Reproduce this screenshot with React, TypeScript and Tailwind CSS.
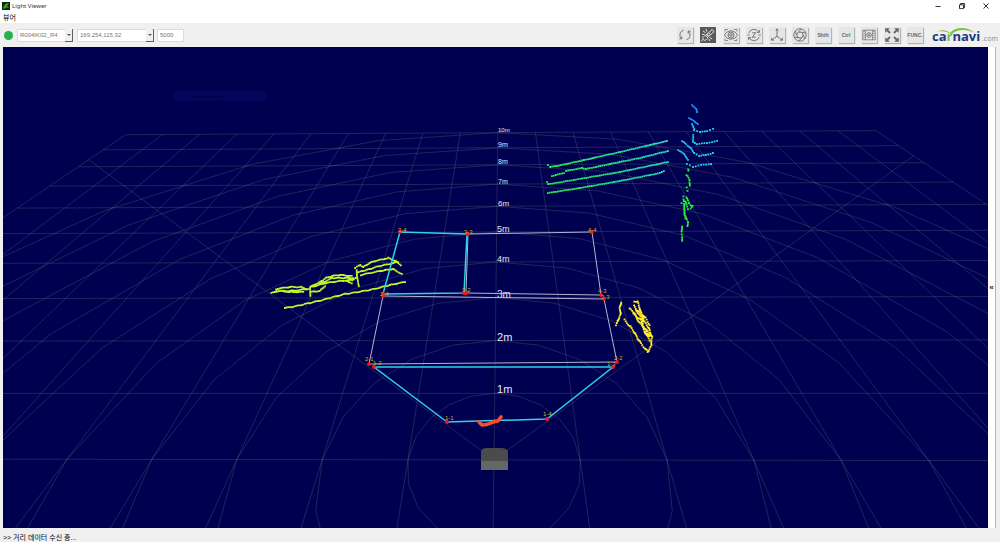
/** Light Viewer - live point cloud window for the distance sensor. */
import { useMemo, useState } from "react";
import type { ReactNode } from "react";

type Point = [number, number];

interface Scan {
  color: string;
  step: number;
  jitter: number;
  lines: Point[][];
}

interface Zone {
  color: string;
  width: number;
  points: Point[];
}

interface Tool {
  label: string;
  icon: ReactNode;
}

const DEVICES = ["R004IK02_R4"];
const ADDRESSES = ["169,254,115,32"];

// Ground plane (meters) -> view coordinates
function project(u: number, d: number): Point {
  const w = 1 + 0.1298 * d - 0.0018 * u;
  return [(494 + 85.3 * u + 65 * d) / w, (459.9 - 15.5 * d - 0.71 * u) / w];
}

// Segment on the ground plane, cut off before it goes behind the camera
function groundSegment(a: Point, b: Point): string {
  const near = -2;
  if (a[1] < near && b[1] < near) return "";
  const cut = (from: Point, to: Point): Point => {
    if (from[1] >= near) return from;
    const t = (near - from[1]) / (to[1] - from[1]);
    return [from[0] + (to[0] - from[0]) * t, near];
  };
  const p = project(...cut(a, b));
  const q = project(...cut(b, a));
  return `M${p[0].toFixed(1)} ${p[1].toFixed(1)}L${q[0].toFixed(1)} ${q[1].toFixed(1)}`;
}

function buildGrid(): string {
  const parts: string[] = [];
  for (let i = -10; i <= 10; i++) {
    parts.push(groundSegment([i, -2], [i, 10]));
  }
  for (let d = 0; d <= 10; d++) {
    parts.push(groundSegment([-10, d], [10, d]));
  }
  // Range rings, 20 segments each
  for (let r = 1; r <= 10; r++) {
    for (let k = 0; k < 20; k++) {
      const a = (k * Math.PI) / 10;
      const b = ((k + 1) * Math.PI) / 10;
      parts.push(
        groundSegment([r * Math.cos(a), r * Math.sin(a)], [r * Math.cos(b), r * Math.sin(b)])
      );
    }
  }
  // Field of view
  parts.push(groundSegment([0, 0], [-10, 8.4]));
  parts.push(groundSegment([0, 0], [10, 8.4]));
  return parts.join("");
}

function buildDots({ lines, step, jitter }: Scan): string {
  let out = "";
  let n = 0;
  for (const line of lines) {
    for (let i = 0; i < line.length - 1; i++) {
      const [x1, y1] = line[i];
      const [x2, y2] = line[i + 1];
      const count = Math.max(1, Math.round(Math.hypot(x2 - x1, y2 - y1) / step));
      for (let k = 0; k <= count; k++) {
        n++;
        const x = x1 + ((x2 - x1) * k) / count + Math.sin(n * 12.9) * jitter;
        const y = y1 + ((y2 - y1) * k) / count + Math.sin(n * 7.3) * jitter;
        out += `M${(x - 0.9).toFixed(1)} ${y.toFixed(1)}h1.8`;
      }
    }
  }
  return out;
}

const SCANS: Scan[] = [
  {
    color: "url(#wall)",
    step: 2,
    jitter: 0.1,
    lines: [
      [[548, 165], [550, 167], [557, 166], [580, 161], [620, 152], [650, 145], [667, 141]],
      [[552, 176], [564, 173], [566, 171], [582, 168], [586, 169], [610, 164], [640, 158], [668, 151]],
      [[547, 182], [548, 184], [556, 183], [620, 172], [668, 162]],
      [[548, 193], [580, 188], [620, 181], [660, 173], [664, 171]],
    ],
  },
  {
    color: "#1e90ff",
    step: 1.8,
    jitter: 0.2,
    lines: [
      [[692, 105], [696, 109], [697, 112]],
      [[689, 118], [694, 121], [698, 124]],
    ],
  },
  {
    color: "#22b8f5",
    step: 2,
    jitter: 0.2,
    lines: [
      [[692, 124], [694, 129]],
      [[693, 135], [693, 141]],
      [[682, 141], [691, 148], [694, 153]],
      [[678, 150], [684, 154], [688, 160]],
    ],
  },
  {
    color: "#22d3ee",
    step: 2.7,
    jitter: 0.1,
    lines: [
      [[694, 130], [700, 132], [707, 131], [713, 129]],
      [[693, 142], [697, 144], [707, 143], [717, 141]],
      [[694, 153], [699, 156], [706, 155], [713, 153]],
      [[687, 164], [693, 167], [701, 165], [711, 164]],
    ],
  },
  {
    color: "#22f03c",
    step: 2.2,
    jitter: 0.6,
    lines: [
      [[688, 169], [688, 170]],
      [[686, 175], [689, 180], [690, 186]],
      [[687, 188], [688, 191]],
      [[684, 196], [687, 197], [689, 203], [692, 206], [690, 209]],
      [[681, 203], [684, 204], [685, 214], [688, 222], [687, 226]],
      [[683, 200], [684, 208], [686, 218]],
      [[686, 201], [688, 209]],
      [[682, 226], [681, 232], [682, 241]],
    ],
  },
  {
    color: "#ffee28",
    step: 1.7,
    jitter: 0.7,
    lines: [
      [[621, 302], [619, 308], [621, 314], [619, 320], [616, 325]],
      [[634, 301], [637, 302], [640, 310], [646, 318], [649, 325]],
      [[629, 309], [634, 313], [641, 324], [648, 333], [652, 337], [652, 346]],
      [[625, 320], [630, 327], [638, 338], [647, 352], [650, 347]],
      [[634, 306], [640, 315], [644, 322], [649, 329], [653, 337]],
      [[634, 314], [640, 319], [643, 328], [650, 340]],
      [[636, 309], [643, 318], [643, 325], [649, 336]],
    ],
  },
  {
    color: "#bdf728",
    step: 1.7,
    jitter: 0.3,
    lines: [
      [[276, 289], [290, 287], [301, 287], [307, 289]],
      [[271, 293], [279, 291], [290, 292], [303, 292]],
      [[276, 291], [290, 291], [308, 289]],
      [[310, 292], [320, 291], [325, 286]],
      [[310, 287], [316, 284], [322, 281], [326, 278], [332, 276], [340, 275], [352, 276]],
      [[311, 287], [326, 283], [340, 281], [352, 280], [357, 277], [357, 270]],
      [[320, 284], [332, 278], [345, 278], [353, 278]],
      [[355, 268], [360, 265], [363, 267], [370, 263], [375, 261], [388, 258], [396, 261], [401, 265]],
      [[357, 273], [362, 271], [370, 269], [380, 266], [398, 262]],
      [[361, 275], [380, 271], [393, 269], [402, 274]],
      [[310, 288], [310, 296]],
      [[357, 278], [359, 286]],
      [[346, 281], [352, 283]],
      [[285, 308], [292, 307], [310, 303], [330, 298], [345, 294], [370, 290], [390, 285], [405, 282]],
    ],
  },
];

const ZONES: Zone[] = [
  { color: "#b4b4d2", width: 1, points: [[468, 234], [592, 232], [601, 295], [466, 293]] },
  { color: "#b4b4d2", width: 1, points: [[383, 296], [604, 299], [617, 362], [369, 364]] },
  { color: "#2fd0e8", width: 1.5, points: [[400, 232], [467, 234], [464, 293], [383, 294]] },
  { color: "#2fd0e8", width: 1.5, points: [[447, 422], [374, 367], [613, 367], [547, 419]] },
];

const ZONE_LABELS: { text: string; x: number; y: number }[] = [
  { text: "1-1", x: 445, y: 420 },
  { text: "1-2", x: 373, y: 365 },
  { text: "1-3", x: 607, y: 366 },
  { text: "1-4", x: 543, y: 416 },
  { text: "2-1", x: 365, y: 361 },
  { text: "2-2", x: 614, y: 360 },
  { text: "2-3", x: 601, y: 299 },
  { text: "2-4", x: 380, y: 296 },
  { text: "3-4", x: 398, y: 232 },
  { text: "3-3", x: 464, y: 234 },
  { text: "3-2", x: 462, y: 292 },
  { text: "4-3", x: 598, y: 293 },
  { text: "4-4", x: 588, y: 232 },
];

const RANGE_LABELS: { m: number; y: number; size: number }[] = [
  { m: 10, y: 132, size: 6 },
  { m: 9, y: 147, size: 7 },
  { m: 8, y: 164, size: 7 },
  { m: 7, y: 184, size: 7 },
  { m: 6, y: 206, size: 8 },
  { m: 5, y: 232, size: 9 },
  { m: 4, y: 262, size: 9 },
  { m: 3, y: 298, size: 10 },
  { m: 2, y: 341, size: 11 },
  { m: 1, y: 393, size: 11 },
];

function Icon({ children }: { children: ReactNode }) {
  return (
    <svg viewBox="0 0 16 16" className="size-4" fill="none" stroke="currentColor" strokeWidth="0.9">
      {children}
    </svg>
  );
}

function KeyCap({ text }: { text: string }) {
  return <span className="text-[5px] leading-4 font-bold">{text}</span>;
}

const TOOLS: Tool[] = [
  {
    label: "Refresh",
    icon: (
      <Icon>
        <path d="M6.6 3.2A5 5 0 0 0 4.4 11.6M9.4 12.8A5 5 0 0 0 11.6 4.4" />
        <path d="M2.4 11.8h2.4V9.4M13.6 4.2h-2.4v2.4" />
      </Icon>
    ),
  },
  {
    label: "Sensor",
    icon: (
      <Icon>
        <path d="M6.8 7.2l5.4-4.6 1.8 2.2-5.4 4.6zM8.6 5.7l1.8 2.2M5.6 8.2l1.2-1 1.8 2.2-1.2 1z" />
        <path d="M5.8 8.6c-2 .2-3.4 1.6-3 3.2.3 1.400 1.900 1.900 3.200 1.100 1-.6 1.600-1.400 1.600-2.400M2.800 12.500l-1.600 1.800" />
        <path d="M5.600 5.800L3 4M6.800 4.600L6 2M4.600 7.400H2M9.600 10.600l2.600 1.400M8.800 11.800l.8 2.200" />
      </Icon>
    ),
  },
  {
    label: "View",
    icon: (
      <Icon>
        <path d="M2 4.5V2.500h3M11 2.500h3v2M14 11.500v2h-3M5 13.500H2v-2" strokeWidth="0.7" />
        <path d="M1.500 8c3-5.500 10-5.500 13 0-3 5.500-10 5.500-13 0z" />
        <circle cx="8" cy="8" r="3" />
        <circle cx="8" cy="8" r="1.300" />
      </Icon>
    ),
  },
  {
    label: "Rotate Z",
    icon: (
      <Icon>
        <path d="M2.8 6A5.5 5.5 0 0 1 12.8 5.200M13.200 10A5.500 5.500 0 0 1 3.200 10.800" />
        <path d="M13.400 3v2.400h-2.400M2.600 13v-2.400h2.400M1.300 8h2.200M12.500 8h2.200" />
        <path d="M6.200 5.800h3.600L6.200 10.200h3.600" />
      </Icon>
    ),
  },
  {
    label: "Axes",
    icon: (
      <Icon>
        <path d="M8 2v7.200L2.800 13M8 9.200l5.200 3.800" />
        <path d="M6.800 3.600L8 1.800l1.200 1.800M2.600 10.800v2.400h2.200M13.400 10.800v2.400h-2.200" />
      </Icon>
    ),
  },
  {
    label: "Aperture",
    icon: (
      <Icon>
        <circle cx="8" cy="8" r="6.200" />
        <path d="M6.300 5.200h3.400L11.400 8l-1.700 2.800H6.300L4.600 8zM6.300 5.200l3-3.300M9.700 5.200l4 .8M11.400 8l1.400 4M9.700 10.800l-3 3.300M6.300 10.800l-4-.8M4.600 8L3.200 4" />
      </Icon>
    ),
  },
  { label: "Shift", icon: <KeyCap text="Shift" /> },
  { label: "Ctrl", icon: <KeyCap text="Ctrl" /> },
  {
    label: "Record",
    icon: (
      <Icon>
        <path d="M1.800 3.200h12.400v9.600H1.800zM4.400 3.200v9.600M11.600 3.200v9.600" strokeWidth="0.7" />
        <path d="M3.100 4v8M12.900 4v8" strokeWidth="0.7" strokeDasharray="1 1" />
        <circle cx="8" cy="8" r="2.300" />
        <circle cx="8" cy="8" r="0.600" />
      </Icon>
    ),
  },
  {
    label: "Fit",
    icon: (
      <Icon>
        <path d="M2.500 2.500l3.500 3.500M13.500 2.500L10 6M2.500 13.500L6 10M13.500 13.500L10 10" strokeWidth="1.800" />
        <path
          d="M1.200 1.200h4.600L1.200 5.800zM14.800 1.200v4.600l-4.600-4.600zM1.200 14.800v-4.600l4.600 4.600zM14.800 14.800h-4.600l4.600-4.600z"
          fill="currentColor"
          stroke="none"
        />
      </Icon>
    ),
  },
  { label: "Function", icon: <KeyCap text="FUNC." /> },
];

function TitleBar() {
  return (
    <header className="flex h-[11px] items-center bg-white pl-[2px]">
      <svg viewBox="0 0 8 8" className="size-2">
        <rect width="8" height="8" fill="#0b2a0b" />
        <path d="M1 6c1-3 3-5 6-5L5 4l2 2-3-.5L2 7z" fill="#2fa52f" />
      </svg>
      <h1 className="pl-[2px] font-['Noto_Sans'] text-[6px] leading-none text-[#333]">Light Viewer</h1>
      <div className="ml-auto flex pr-[2px] text-black">
        <button aria-label="Minimize" className="flex w-6 justify-center">
          <svg viewBox="0 0 8 8" className="size-2" fill="none" stroke="currentColor" strokeWidth="0.8">
            <path d="M1.500 4.500h5" />
          </svg>
        </button>
        <button aria-label="Restore" className="flex w-6 justify-center">
          <svg viewBox="0 0 8 8" className="size-2" fill="none" stroke="currentColor" strokeWidth="0.8">
            <path d="M1.500 2.800h4v3.800h-4zM2.600 2.800V1.500h4v4H5.500" />
          </svg>
        </button>
        <button aria-label="Close" className="flex w-6 justify-center">
          <svg viewBox="0 0 8 8" className="size-2" fill="none" stroke="currentColor" strokeWidth="0.8">
            <path d="M1.500 1.500l5 5M6.500 1.500l-5 5" />
          </svg>
        </button>
      </div>
    </header>
  );
}

interface DropDownProps {
  label: string;
  className: string;
  options: string[];
}

function DropDown({ label, className, options }: DropDownProps) {
  return (
    <div className={`relative h-[13px] ${className}`}>
      <select
        aria-label={label}
        className="block h-full w-full appearance-none border border-[#dcdcdc] bg-white pl-[2px] text-[6px] leading-none text-[#757575] outline-none"
      >
        {options.map((option) => (
          <option key={option}>{option}</option>
        ))}
      </select>
      <span className="pointer-events-none absolute inset-y-0 right-0 flex w-2 items-center justify-center border-r border-b border-[#606060] bg-[#f0f0f0]">
        <svg viewBox="0 0 4 2" className="h-[2px] w-1">
          <path d="M0 0h4L2 2z" fill="#555" />
        </svg>
      </span>
    </div>
  );
}

function Logo() {
  return (
    <a href="#" aria-label="carnavi.com" className="block">
      <svg viewBox="0 0 66 20" className="h-5 w-[66px]">
        <text x="0" y="16" fontSize="13" fontWeight="bold" fill="#1b3a80" className="font-['Open_Sans',sans-serif]">
          ca<tspan fill="#7dc142">r</tspan>navi
        </text>
        <path
          d="M5 6.500C10 4.500 15 5 18 8 23 2 35 1 43 8 35 4 25 3.500 19.500 9.500 15.500 6.500 11 5.500 5 6.500z"
          fill="#7dc142"
        />
        <text x="50" y="16" fontSize="7" fill="#8a8a8a" className="font-['Open_Sans',sans-serif]">
          .com
        </text>
      </svg>
    </a>
  );
}

function Toolbar() {
  const [active, setActive] = useState("Sensor");
  const [port, setPort] = useState("5000");

  return (
    <div className="flex h-6 items-center bg-[#f0f0f0] pr-[2px] pl-1">
      <span className="size-[9px] rounded-full bg-[#22b14c]" />
      <DropDown label="Device" className="ml-1 w-14" options={DEVICES} />
      <DropDown label="Address" className="ml-1 w-[77px]" options={ADDRESSES} />
      <input
        aria-label="Port"
        value={port}
        onChange={(e) => setPort(e.target.value)}
        className="ml-[3px] h-[13px] w-[27px] border border-[#dcdcdc] bg-white pl-[2px] text-[6px] leading-none text-[#757575] outline-none"
      />
      <div className="ml-auto flex gap-[7px] pr-[9px]">
        {TOOLS.map((tool) => (
          <button
            key={tool.label}
            aria-label={tool.label}
            onClick={() => setActive(tool.label)}
            className={`flex size-4 items-center justify-center ${
              active === tool.label
                ? "bg-[#5a5a5a] text-[#f0f0f0]"
                : "bg-[#e6e6e6] text-[#666] shadow-[1px_1px_1px_#b4b4b4]"
            }`}
          >
            {tool.icon}
          </button>
        ))}
      </div>
      <Logo />
    </div>
  );
}

function PointCloudView() {
  const grid = useMemo(buildGrid, []);
  const scans = useMemo(() => SCANS.map((scan) => ({ color: scan.color, d: buildDots(scan) })), []);

  return (
    <svg
      viewBox="3 47 985 481"
      preserveAspectRatio="xMidYMid slice"
      className="block h-full w-full font-['Liberation_Sans',sans-serif]"
    >
      <defs>
        <linearGradient id="wall" gradientUnits="userSpaceOnUse" x1="545" y1="0" x2="670" y2="0">
          <stop offset="0" stopColor="#22ee50" />
          <stop offset="0.4" stopColor="#22e878" />
          <stop offset="1" stopColor="#26d8cc" />
        </linearGradient>
      </defs>

      <rect x="174" y="91" width="92" height="10" fill="#05055e" />
      <path d="M191 97h32" stroke="#02024a" strokeWidth="2" />

      <path d={grid} fill="none" stroke="#a0b090" strokeOpacity="0.25" strokeWidth="0.8" />

      {RANGE_LABELS.map(({ m, y, size }) => (
        <text key={m} x={m > 5 ? 498 : 497} y={y} fontSize={size} fill="#e6e6f5">
          {m}m
        </text>
      ))}

      {/* Sensor body */}
      <path d="M481 462v-11q1-3 6-3h14q5 0 7 3v11z" fill="#4b4b4b" />
      <path d="M481 461h27v9h-27z" fill="#666" />

      {scans.map((scan, index) => (
        <path key={index} d={scan.d} fill="none" stroke={scan.color} strokeWidth="1.800" />
      ))}

      {ZONES.map((zone, index) => (
        <polygon
          key={index}
          points={zone.points.map((p) => p.join(",")).join(" ")}
          fill="none"
          stroke={zone.color}
          strokeWidth={zone.width}
        />
      ))}
      {ZONES.flatMap((zone) => zone.points).map(([x, y]) => (
        <circle key={`${x}-${y}`} cx={x} cy={y} r="1.900" fill="#ff1414" />
      ))}
      {ZONE_LABELS.map(({ text, x, y }) => (
        <text key={text} x={x} y={y} fontSize="6" fill="#c8b428">
          {text}
        </text>
      ))}

      {/* Closest object */}
      <path
        d="M479 422l3 3q5 0 9-2t7-2l3-4"
        fill="none"
        stroke="#ff4a28"
        strokeWidth="3.600"
        strokeLinejoin="round"
        strokeLinecap="round"
      />
    </svg>
  );
}

export default function App() {
  return (
    <div className="flex h-screen flex-col overflow-hidden bg-[#f0f0f0] font-['Liberation_Sans','Noto_Sans_CJK_KR',sans-serif]">
      <TitleBar />
      <nav className="flex h-3 items-center bg-white pl-[3px]">
        <button className="text-[7px] leading-none text-black">뷰어</button>
      </nav>
      <Toolbar />

      <div className="flex min-h-0 flex-1 pl-[3px]">
        <main className="min-w-0 flex-1 bg-[#000050]">
          <PointCloudView />
        </main>
        <button
          aria-label="Open side panel"
          className="flex w-2 items-center justify-center border-r border-[#b4b4b4] bg-white text-[8px] leading-none font-bold text-[#222]"
        >
          «
        </button>
        <div className="w-1" />
      </div>

      <footer className="flex h-[14px] items-center pt-1 pl-[3px] text-[7px] leading-none text-black">
        &gt;&gt; 거리 데이터 수신 중...
      </footer>
    </div>
  );
}
